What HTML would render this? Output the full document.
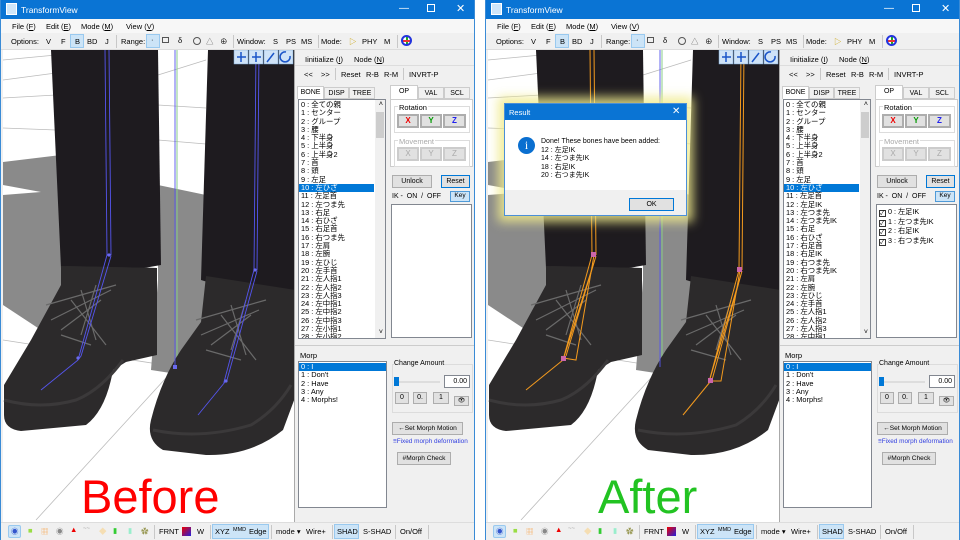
<!DOCTYPE html>
<html><head><meta charset="utf-8">
<style>
*{margin:0;padding:0;box-sizing:border-box}
body{width:960px;height:540px;background:#fff;position:relative;overflow:hidden;font-family:"Liberation Sans","Noto Sans CJK JP",sans-serif;font-size:7.5px;color:#000}
.win{position:absolute;top:0;width:475px;height:540px;background:#f0f0f0;overflow:hidden;border-left:1px solid #3a8bd6;border-right:1px solid #3a8bd6}
.a{position:absolute;white-space:nowrap}
.title{left:0;top:0;width:475px;height:19px;background:#0a74d4;color:#fff;font-size:8.5px}
.menu{left:0;top:19px;width:475px;height:14px;background:#f7f7f7}
.tb{left:0;top:33px;width:475px;height:17px;background:#f0f0f0;border-bottom:1px solid #ddd}
.sel{background:#cce4f7;border:1px solid #99c9ef}
.vp{left:2px;top:50px;width:291px;height:472px;background:#fff;overflow:hidden}
.vp svg{display:block}
.btn{position:absolute;background:#e1e1e1;border:1px solid #adadad;text-align:center;font-size:7px;white-space:nowrap;overflow:hidden}
.box{position:absolute;background:#fff;border:1px solid #828790}
.li{height:8.3px;line-height:8.3px;font-size:7.4px;padding-left:2px;white-space:nowrap}
.hl{background:#0078d7;color:#fff}
.grp{position:absolute;border:1px solid #dcdcdc}
.status{left:0;top:522px;width:475px;height:18px;background:#f0f0f0;border-top:1px solid #ddd}
.sep{position:absolute;width:1px;background:#c8c8c8}
.tab{position:absolute;height:12px;border:1px solid #ccc;font-size:7px;padding-top:2px;text-align:center}
</style></head><body>

<!-- LEFT WINDOW -->
<div class="win" style="left:0">
 <div class="a title"><span class="a" style="left:5px;top:3px;width:11px;height:12px;background:#cfe6fa;border:1px solid #fff"></span><span class="a" style="left:20px;top:5px">TransformView</span>
  <span class="a" style="left:398px;top:3px;font-size:10px">&#8212;</span><span class="a" style="left:426px;top:4px;width:8px;height:8px;border:1px solid #fff"></span><span class="a" style="left:455px;top:2px;font-size:11px">✕</span></div>
 <div class="a menu"><span class="a" style="left:11px;top:3px">File (<u>F</u>)</span><span class="a" style="left:45px;top:3px">Edit (<u>E</u>)</span><span class="a" style="left:80px;top:3px">Mode (<u>M</u>)</span><span class="a" style="left:125px;top:3px">View (<u>V</u>)</span></div>
 <div class="a tb">
  <span class="a" style="left:10px;top:4px">Options:</span><span class="a" style="left:45px;top:4px">V</span><span class="a" style="left:60px;top:4px">F</span>
  <span class="a sel" style="left:69px;top:1px;width:14px;height:14px"></span><span class="a" style="left:74px;top:4px">B</span>
  <span class="a" style="left:86px;top:4px">BD</span><span class="a" style="left:104px;top:4px">J</span><span class="sep" style="left:115px;top:2px;height:13px"></span>
  <span class="a" style="left:120px;top:4px">Range:</span><span class="a sel" style="left:145px;top:1px;width:14px;height:14px"></span><span class="a" style="left:150px;top:2px">·</span>
  <span class="a" style="left:161px;top:4px;width:7px;height:6px;border:1px solid #555"></span><span class="a" style="left:177px;top:3px">δ</span><span class="a" style="left:192px;top:4px;width:8px;height:8px;border:1px solid #555;border-radius:50%"></span><span class="a" style="left:205px;top:3px;color:#555">△</span><span class="a" style="left:219px;top:3px">⊕</span>
  <span class="sep" style="left:232px;top:2px;height:13px"></span><span class="a" style="left:236px;top:4px">Window:</span><span class="a" style="left:272px;top:4px">S</span><span class="a" style="left:285px;top:4px">PS</span><span class="a" style="left:300px;top:4px">MS</span>
  <span class="sep" style="left:317px;top:2px;height:13px"></span><span class="a" style="left:320px;top:4px">Mode:</span><span class="a" style="left:348px;top:3px;color:#c8a000">▷</span><span class="a" style="left:361px;top:4px">PHY</span><span class="a" style="left:383px;top:4px">M</span>
  <span class="sep" style="left:396px;top:2px;height:13px"></span><span class="a" style="left:400px;top:2px;width:11px;height:11px;border-radius:50%;border:2px solid #2233dd;background:linear-gradient(#e33,#e33) center/7px 2px no-repeat,linear-gradient(#2a2,#2a2) center/2px 7px no-repeat,#fff"></span>
 </div>
 <div class="a vp"><svg width="291" height="472" viewBox="2 50 291 472">
  <g stroke="#bbb" stroke-width="0.8"><line x1="2" y1="60" x2="55" y2="55"/><line x1="2" y1="80" x2="55" y2="73"/><line x1="2" y1="98" x2="55" y2="95"/><line x1="2" y1="128" x2="55" y2="130"/><line x1="157" y1="75" x2="205" y2="60"/><line x1="157" y1="105" x2="205" y2="108"/><line x1="157" y1="140" x2="205" y2="144"/><line x1="2" y1="340" x2="293" y2="385"/><line x1="35" y1="520" x2="175" y2="367"/></g>
  <path d="M2 162 L60 155 L60 300 L100 360 L40 330 L2 305Z" fill="#8a8a8a"/>
  <path d="M157 185 L205 195 L210 300 L215 380 L150 370 L157 280Z" fill="#8a8a8a"/>
  <path d="M2 185 L40 192 L2 195Z" fill="#fff"/>
  <line x1="176" y1="50" x2="176" y2="367" stroke="#8c8" stroke-width="1"/>
  <path d="M50 50 L157 50 L160 265 L120 272 L60 268Z" fill="#1e1b1f"/>
  <path d="M207 50 L295 50 L295 292 L258 298 L200 280Z" fill="#1e1b1f"/>
  <path d="M65 266 L156 268 L156 355 L125 362 L112 370 Q105 410 85 425 L20 431 Q3 429 3 415 L3 385 L30 340 L60 285Z" fill="#2c2a2b"/>
  <path d="M60 266 L156 268 L156 355 L60 355Z" fill="#2c2a2b"/>
  <path d="M205 276 L295 290 L295 395 L282 430 Q250 456 205 455 L162 450 Q145 440 150 420 Q160 380 180 350 L200 322Z" fill="#2c2a2b"/>
  <path d="M3 400 Q40 410 75 400 Q100 390 122 360" stroke="#3b393a" stroke-width="3" fill="none"/>
  <path d="M152 430 Q200 440 250 425 Q275 410 290 385" stroke="#3b393a" stroke-width="3" fill="none"/>
  <g stroke="#6a6a6a" stroke-width="1.2" fill="none"><path d="M45 305 L115 285 M50 320 L110 290 M60 330 L100 300 M80 290 L95 340 M70 300 L105 345 M95 285 L80 335 M90 345 L60 335"/><path d="M195 320 L265 300 M200 335 L258 310 M210 345 L250 315 M230 305 L245 355 M220 315 L255 360 M245 300 L230 350 M240 360 L205 350"/></g>
  <g stroke="#5555ee" stroke-width="0.9" fill="none"><path d="M104 50 L106 255 L110 255 L108 50"/><path d="M106 255 L77 360 L80 356 L110 256"/><path d="M77 360 L40 390"/><path d="M255 50 L253 270 L256 270 L258 50"/><path d="M253 270 L223 382 L226 380 L256 271"/><path d="M224 382 L197 415"/><line x1="174" y1="50" x2="174" y2="367"/></g>
  <g fill="#6a6aee"><circle cx="108" cy="255" r="1.6"/><circle cx="77" cy="358" r="1.6"/><circle cx="254" cy="270" r="1.6"/><circle cx="225" cy="381" r="1.6"/><rect x="172" y="365" width="4" height="4"/></g>
  <g fill="#cfe3f7" stroke="#7aa7d6" stroke-width="0.5"><rect x="233" y="50" width="14" height="14"/><rect x="248" y="50" width="14" height="14"/><rect x="263" y="50" width="14" height="14"/><rect x="278" y="50" width="14" height="14"/></g>
  <g stroke="#1a55c8" stroke-width="1.5" fill="none"><path d="M236 57 H245 M240 52 V62"/><path d="M251 57 H260 M255 52 V62"/><path d="M266 62 L273 53"/><path d="M289 56 A5 5 0 1 1 285 52"/></g>
  <text x="80" y="513" font-family="Liberation Sans" font-size="47" fill="#f00">Before</text>
 </svg></div>
 <div class="a" style="left:293px;top:50px;width:182px;height:472px;background:#f0f0f0;border-left:1px solid #aaa"></div>
 <span class="a" style="left:304px;top:55px">Iinitialize (<u>I</u>)</span><span class="a" style="left:353px;top:55px">Node (<u>N</u>)</span>
 <div class="a" style="left:294px;top:65px;width:180px;height:1px;background:#ddd"></div>
 <span class="a" style="left:303px;top:70px">&lt;&lt;</span><span class="a" style="left:320px;top:70px">&gt;&gt;</span><span class="sep" style="left:334px;top:68px;height:12px"></span><span class="a" style="left:340px;top:70px">Reset</span><span class="a" style="left:365px;top:70px">R-B</span><span class="a" style="left:383px;top:70px">R-M</span><span class="sep" style="left:402px;top:68px;height:12px"></span><span class="a" style="left:408px;top:70px">INVRT-P</span>
 <div class="tab" style="left:296px;top:86px;width:27px;height:13px;background:#fff;border-bottom:none">BONE</div><div class="tab" style="left:323px;top:87px;width:25px">DISP</div><div class="tab" style="left:348px;top:87px;width:26px">TREE</div>
 <div class="box" style="left:297px;top:99px;width:88px;height:240px;overflow:hidden"><div style="padding-top:1px">
  <div class="li">0 : 全ての親</div><div class="li">1 : センター</div><div class="li">2 : グループ</div><div class="li">3 : 腰</div><div class="li">4 : 下半身</div><div class="li">5 : 上半身</div><div class="li">6 : 上半身2</div><div class="li">7 : 首</div><div class="li">8 : 頭</div><div class="li">9 : 左足</div><div class="li hl" style="width:75px">10 : 左ひざ</div><div class="li">11 : 左足首</div><div class="li">12 : 左つま先</div><div class="li">13 : 右足</div><div class="li">14 : 右ひざ</div><div class="li">15 : 右足首</div><div class="li">16 : 右つま先</div><div class="li">17 : 左肩</div><div class="li">18 : 左腕</div><div class="li">19 : 左ひじ</div><div class="li">20 : 左手首</div><div class="li">21 : 左人指1</div><div class="li">22 : 左人指2</div><div class="li">23 : 左人指3</div><div class="li">24 : 左中指1</div><div class="li">25 : 左中指2</div><div class="li">26 : 左中指3</div><div class="li">27 : 左小指1</div><div class="li">28 : 左小指2</div></div>
  <div class="a" style="right:0;top:0;width:10px;height:238px;background:#f0f0f0"></div><div class="a" style="right:1px;top:12px;width:8px;height:26px;background:#cdcdcd"></div><span class="a" style="right:2px;top:1px;font-size:7px">˄</span><span class="a" style="right:2px;top:229px;font-size:7px">˅</span></div>
 <div class="tab" style="left:389px;top:85px;width:28px;height:14px;background:#fff;border-bottom:none">OP</div><div class="tab" style="left:417px;top:87px;width:26px">VAL</div><div class="tab" style="left:443px;top:87px;width:26px">SCL</div>
 <div class="a" style="left:389px;top:99px;width:83px;height:68px;background:#fff;border:1px solid #ccc"></div>
 <div class="grp" style="left:393px;top:106px;width:76px;height:27px"></div><span class="a" style="left:397px;top:103px;background:#fff;padding:0 1px">Rotation</span>
 <div class="btn" style="left:396px;top:114px;width:22px;height:14px;color:#e00;font-weight:bold;border:2px solid #adadad;font-size:8px">X</div><div class="btn" style="left:419px;top:114px;width:22px;height:14px;color:#090;font-weight:bold;border:2px solid #adadad;font-size:8px">Y</div><div class="btn" style="left:442px;top:114px;width:23px;height:14px;color:#22e;font-weight:bold;border:2px solid #adadad;font-size:8px">Z</div>
 <div class="grp" style="left:393px;top:140px;width:76px;height:27px"></div><span class="a" style="left:397px;top:137px;background:#fff;color:#aaa;padding:0 1px">Movement</span>
 <div class="btn" style="left:396px;top:147px;width:22px;height:14px;color:#aaa;border:2px solid #ccc;font-size:8px">X</div><div class="btn" style="left:419px;top:147px;width:22px;height:14px;color:#aaa;border:2px solid #ccc;font-size:8px">Y</div><div class="btn" style="left:442px;top:147px;width:23px;height:14px;color:#aaa;border:2px solid #ccc;font-size:8px">Z</div>
 <div class="btn" style="left:391px;top:175px;width:40px;height:13px;padding-top:2px">Unlock</div><div class="btn" style="left:440px;top:175px;width:29px;height:13px;border:1px solid #0078d7;padding-top:2px">Reset</div>
 <span class="a" style="left:391px;top:193px;font-size:7px">IK -&nbsp; ON&nbsp; /&nbsp; OFF</span><div class="btn" style="left:449px;top:191px;width:20px;height:11px;background:#cce4f7;border-color:#4f9ad8;font-size:6.5px">Key</div>
 <div class="box" style="left:390px;top:204px;width:81px;height:134px"></div>
 <div class="a" style="left:294px;top:345px;width:180px;height:1px;background:#ccc"></div>
 <span class="a" style="left:299px;top:351px">Morp</span>
 <div class="box" style="left:297px;top:361px;width:89px;height:147px"><div class="li hl" style="margin-top:1px">0 : I</div><div class="li">1 : Don't</div><div class="li">2 : Have</div><div class="li">3 : Any</div><div class="li">4 : Morphs!</div></div>
 <div class="grp" style="left:391px;top:364px;width:81px;height:49px"></div><span class="a" style="left:393px;top:360px;background:#f0f0f0;font-size:7px">Change Amount</span>
 <div class="a" style="left:394px;top:381px;width:45px;height:2px;background:#ddd"></div><div class="a" style="left:393px;top:377px;width:5px;height:9px;background:#0078d7"></div>
 <div class="box" style="left:443px;top:375px;width:26px;height:13px;text-align:right;padding:2px 2px 0 0;font-size:7px">0.00</div>
 <div class="btn" style="left:394px;top:392px;width:14px;height:12px;padding-top:1px">0</div><div class="btn" style="left:412px;top:392px;width:14px;height:12px;padding-top:1px">0.</div><div class="btn" style="left:432px;top:392px;width:16px;height:12px;padding-top:1px">1</div><div class="btn" style="left:453px;top:396px;width:15px;height:10px;font-size:6px">👁</div>
 <div class="btn" style="left:391px;top:422px;width:71px;height:13px;padding-top:2px;font-size:6.6px">←Set Morph Motion</div>
 <span class="a" style="left:392px;top:438px;color:#3340e0;font-size:6.4px">≡Fixed morph deformation</span>
 <div class="btn" style="left:396px;top:452px;width:54px;height:13px;padding-top:2px;font-size:6.6px">#Morph Check</div>
 <div class="a status">
  <span class="a sel" style="left:7px;top:2px;width:13px;height:13px;border-radius:2px"></span><span class="a" style="left:10px;top:3px;color:#35c">◉</span>
  <span class="a" style="left:27px;top:3px;color:#9d4">■</span><span class="a" style="left:40px;top:3px;color:#f6b26b">▦</span><span class="a" style="left:55px;top:3px;color:#888">◉</span><span class="a" style="left:69px;top:2px;color:#e00">▲</span><span class="a" style="left:82px;top:3px;color:#aaa;font-size:6px">~~</span><span class="a" style="left:98px;top:3px;color:#f5deb3">◆</span><span class="a" style="left:112px;top:3px;color:#3c3">▮</span><span class="a" style="left:127px;top:3px;color:#9ec">▮</span><span class="a" style="left:140px;top:3px;color:#995">✿</span>
  <span class="sep" style="left:153px;top:2px;height:14px"></span><span class="a" style="left:158px;top:4px">FRNT</span><span class="a" style="left:181px;top:4px;width:9px;height:9px;background:linear-gradient(135deg,#e00,#22d)"></span><span class="a" style="left:196px;top:4px">W</span>
  <span class="sep" style="left:209px;top:2px;height:14px"></span><span class="a sel" style="left:211px;top:1px;width:57px;height:15px"></span><span class="a" style="left:214px;top:4px">XYZ</span><span class="a" style="left:232px;top:4px;font-size:5.5px">MMD</span><span class="a" style="left:248px;top:4px">Edge</span>
  <span class="sep" style="left:270px;top:2px;height:14px"></span><span class="a" style="left:275px;top:4px">mode ▾</span><span class="a" style="left:305px;top:4px">Wire+</span>
  <span class="sep" style="left:331px;top:2px;height:14px"></span><span class="a sel" style="left:333px;top:1px;width:25px;height:15px"></span><span class="a" style="left:336px;top:4px">SHAD</span><span class="a" style="left:362px;top:4px">S-SHAD</span>
  <span class="sep" style="left:394px;top:2px;height:14px"></span><span class="a" style="left:399px;top:4px">On/Off</span><span class="sep" style="left:427px;top:2px;height:14px"></span>
 </div>
</div>

<!-- RIGHT WINDOW -->
<div class="win" style="left:485px">
 <div class="a title"><span class="a" style="left:5px;top:3px;width:11px;height:12px;background:#cfe6fa;border:1px solid #fff"></span><span class="a" style="left:20px;top:5px">TransformView</span>
  <span class="a" style="left:398px;top:3px;font-size:10px">&#8212;</span><span class="a" style="left:426px;top:4px;width:8px;height:8px;border:1px solid #fff"></span><span class="a" style="left:455px;top:2px;font-size:11px">✕</span></div>
 <div class="a menu"><span class="a" style="left:11px;top:3px">File (<u>F</u>)</span><span class="a" style="left:45px;top:3px">Edit (<u>E</u>)</span><span class="a" style="left:80px;top:3px">Mode (<u>M</u>)</span><span class="a" style="left:125px;top:3px">View (<u>V</u>)</span></div>
 <div class="a tb">
  <span class="a" style="left:10px;top:4px">Options:</span><span class="a" style="left:45px;top:4px">V</span><span class="a" style="left:60px;top:4px">F</span>
  <span class="a sel" style="left:69px;top:1px;width:14px;height:14px"></span><span class="a" style="left:74px;top:4px">B</span>
  <span class="a" style="left:86px;top:4px">BD</span><span class="a" style="left:104px;top:4px">J</span><span class="sep" style="left:115px;top:2px;height:13px"></span>
  <span class="a" style="left:120px;top:4px">Range:</span><span class="a sel" style="left:145px;top:1px;width:14px;height:14px"></span><span class="a" style="left:150px;top:2px">·</span>
  <span class="a" style="left:161px;top:4px;width:7px;height:6px;border:1px solid #555"></span><span class="a" style="left:177px;top:3px">δ</span><span class="a" style="left:192px;top:4px;width:8px;height:8px;border:1px solid #555;border-radius:50%"></span><span class="a" style="left:205px;top:3px;color:#555">△</span><span class="a" style="left:219px;top:3px">⊕</span>
  <span class="sep" style="left:232px;top:2px;height:13px"></span><span class="a" style="left:236px;top:4px">Window:</span><span class="a" style="left:272px;top:4px">S</span><span class="a" style="left:285px;top:4px">PS</span><span class="a" style="left:300px;top:4px">MS</span>
  <span class="sep" style="left:317px;top:2px;height:13px"></span><span class="a" style="left:320px;top:4px">Mode:</span><span class="a" style="left:348px;top:3px;color:#c8a000">▷</span><span class="a" style="left:361px;top:4px">PHY</span><span class="a" style="left:383px;top:4px">M</span>
  <span class="sep" style="left:396px;top:2px;height:13px"></span><span class="a" style="left:400px;top:2px;width:11px;height:11px;border-radius:50%;border:2px solid #2233dd;background:linear-gradient(#e33,#e33) center/7px 2px no-repeat,linear-gradient(#2a2,#2a2) center/2px 7px no-repeat,#fff"></span>
 </div>
 <div class="a vp"><svg width="291" height="472" viewBox="2 50 291 472">
  <g stroke="#bbb" stroke-width="0.8"><line x1="2" y1="60" x2="55" y2="55"/><line x1="2" y1="80" x2="55" y2="73"/><line x1="2" y1="98" x2="55" y2="95"/><line x1="2" y1="128" x2="55" y2="130"/><line x1="157" y1="75" x2="205" y2="60"/><line x1="157" y1="105" x2="205" y2="108"/><line x1="157" y1="140" x2="205" y2="144"/><line x1="2" y1="340" x2="293" y2="385"/><line x1="35" y1="520" x2="175" y2="367"/></g>
  <path d="M2 162 L60 155 L60 300 L100 360 L40 330 L2 305Z" fill="#8a8a8a"/>
  <path d="M157 185 L205 195 L210 300 L215 380 L150 370 L157 280Z" fill="#8a8a8a"/>
  <path d="M2 185 L40 192 L2 195Z" fill="#fff"/>
  <line x1="176" y1="50" x2="176" y2="367" stroke="#8c8" stroke-width="1"/>
  <path d="M50 50 L157 50 L160 265 L120 272 L60 268Z" fill="#1e1b1f"/>
  <path d="M207 50 L295 50 L295 292 L258 298 L200 280Z" fill="#1e1b1f"/>
  <path d="M65 266 L156 268 L156 355 L125 362 L112 370 Q105 410 85 425 L20 431 Q3 429 3 415 L3 385 L30 340 L60 285Z" fill="#2c2a2b"/>
  <path d="M60 266 L156 268 L156 355 L60 355Z" fill="#2c2a2b"/>
  <path d="M205 276 L295 290 L295 395 L282 430 Q250 456 205 455 L162 450 Q145 440 150 420 Q160 380 180 350 L200 322Z" fill="#2c2a2b"/>
  <path d="M3 400 Q40 410 75 400 Q100 390 122 360" stroke="#3b393a" stroke-width="3" fill="none"/>
  <path d="M152 430 Q200 440 250 425 Q275 410 290 385" stroke="#3b393a" stroke-width="3" fill="none"/>
  <g stroke="#6a6a6a" stroke-width="1.2" fill="none"><path d="M45 305 L115 285 M50 320 L110 290 M60 330 L100 300 M80 290 L95 340 M70 300 L105 345 M95 285 L80 335 M90 345 L60 335"/><path d="M195 320 L265 300 M200 335 L258 310 M210 345 L250 315 M230 305 L245 355 M220 315 L255 360 M245 300 L230 350 M240 360 L205 350"/></g>
  <g stroke="#f39a1e" stroke-width="1" fill="none"><path d="M104 50 L106 255 M108 50 L110 255"/><path d="M106 255 L77 360 L110 256 L80 356"/><path d="M77 360 L40 390"/><path d="M255 50 L253 270 M258 50 L256 270"/><path d="M253 270 L223 382 L256 271 L226 380"/><path d="M224 382 L197 415"/><path d="M108 255 L90 360 L77 358 M254 270 L235 381 L225 381"/></g>
  <line x1="174" y1="50" x2="174" y2="367" stroke="#5555ee" stroke-width="0.9"/>
  <g fill="#c6a"><rect x="105" y="252" width="5" height="5"/><rect x="75" y="356" width="5" height="5"/><rect x="251" y="267" width="5" height="5"/><rect x="222" y="378" width="5" height="5"/></g>
  <g fill="#cfe3f7" stroke="#7aa7d6" stroke-width="0.5"><rect x="233" y="50" width="14" height="14"/><rect x="248" y="50" width="14" height="14"/><rect x="263" y="50" width="14" height="14"/><rect x="278" y="50" width="14" height="14"/></g>
  <g stroke="#1a55c8" stroke-width="1.5" fill="none"><path d="M236 57 H245 M240 52 V62"/><path d="M251 57 H260 M255 52 V62"/><path d="M266 62 L273 53"/><path d="M289 56 A5 5 0 1 1 285 52"/></g>
  <text x="112" y="513" font-family="Liberation Sans" font-size="47" fill="#22c322">After</text>
 </svg></div>
 <div class="a" style="left:293px;top:50px;width:182px;height:472px;background:#f0f0f0;border-left:1px solid #aaa"></div>
 <span class="a" style="left:304px;top:55px">Iinitialize (<u>I</u>)</span><span class="a" style="left:353px;top:55px">Node (<u>N</u>)</span>
 <div class="a" style="left:294px;top:65px;width:180px;height:1px;background:#ddd"></div>
 <span class="a" style="left:303px;top:70px">&lt;&lt;</span><span class="a" style="left:320px;top:70px">&gt;&gt;</span><span class="sep" style="left:334px;top:68px;height:12px"></span><span class="a" style="left:340px;top:70px">Reset</span><span class="a" style="left:365px;top:70px">R-B</span><span class="a" style="left:383px;top:70px">R-M</span><span class="sep" style="left:402px;top:68px;height:12px"></span><span class="a" style="left:408px;top:70px">INVRT-P</span>
 <div class="tab" style="left:296px;top:86px;width:27px;height:13px;background:#fff;border-bottom:none">BONE</div><div class="tab" style="left:323px;top:87px;width:25px">DISP</div><div class="tab" style="left:348px;top:87px;width:26px">TREE</div>
 <div class="box" style="left:297px;top:99px;width:88px;height:240px;overflow:hidden"><div style="padding-top:1px">
  <div class="li">0 : 全ての親</div><div class="li">1 : センター</div><div class="li">2 : グループ</div><div class="li">3 : 腰</div><div class="li">4 : 下半身</div><div class="li">5 : 上半身</div><div class="li">6 : 上半身2</div><div class="li">7 : 首</div><div class="li">8 : 頭</div><div class="li">9 : 左足</div><div class="li hl" style="width:75px">10 : 左ひざ</div><div class="li">11 : 左足首</div><div class="li">12 : 左足IK</div><div class="li">13 : 左つま先</div><div class="li">14 : 左つま先IK</div><div class="li">15 : 右足</div><div class="li">16 : 右ひざ</div><div class="li">17 : 右足首</div><div class="li">18 : 右足IK</div><div class="li">19 : 右つま先</div><div class="li">20 : 右つま先IK</div><div class="li">21 : 左肩</div><div class="li">22 : 左腕</div><div class="li">23 : 左ひじ</div><div class="li">24 : 左手首</div><div class="li">25 : 左人指1</div><div class="li">26 : 左人指2</div><div class="li">27 : 左人指3</div><div class="li">28 : 左中指1</div></div>
  <div class="a" style="right:0;top:0;width:10px;height:238px;background:#f0f0f0"></div><div class="a" style="right:1px;top:12px;width:8px;height:26px;background:#cdcdcd"></div><span class="a" style="right:2px;top:1px;font-size:7px">˄</span><span class="a" style="right:2px;top:229px;font-size:7px">˅</span></div>
 <div class="tab" style="left:389px;top:85px;width:28px;height:14px;background:#fff;border-bottom:none">OP</div><div class="tab" style="left:417px;top:87px;width:26px">VAL</div><div class="tab" style="left:443px;top:87px;width:26px">SCL</div>
 <div class="a" style="left:389px;top:99px;width:83px;height:68px;background:#fff;border:1px solid #ccc"></div>
 <div class="grp" style="left:393px;top:106px;width:76px;height:27px"></div><span class="a" style="left:397px;top:103px;background:#fff;padding:0 1px">Rotation</span>
 <div class="btn" style="left:396px;top:114px;width:22px;height:14px;color:#e00;font-weight:bold;border:2px solid #adadad;font-size:8px">X</div><div class="btn" style="left:419px;top:114px;width:22px;height:14px;color:#090;font-weight:bold;border:2px solid #adadad;font-size:8px">Y</div><div class="btn" style="left:442px;top:114px;width:23px;height:14px;color:#22e;font-weight:bold;border:2px solid #adadad;font-size:8px">Z</div>
 <div class="grp" style="left:393px;top:140px;width:76px;height:27px"></div><span class="a" style="left:397px;top:137px;background:#fff;color:#aaa;padding:0 1px">Movement</span>
 <div class="btn" style="left:396px;top:147px;width:22px;height:14px;color:#aaa;border:2px solid #ccc;font-size:8px">X</div><div class="btn" style="left:419px;top:147px;width:22px;height:14px;color:#aaa;border:2px solid #ccc;font-size:8px">Y</div><div class="btn" style="left:442px;top:147px;width:23px;height:14px;color:#aaa;border:2px solid #ccc;font-size:8px">Z</div>
 <div class="btn" style="left:391px;top:175px;width:40px;height:13px;padding-top:2px">Unlock</div><div class="btn" style="left:440px;top:175px;width:29px;height:13px;border:1px solid #0078d7;padding-top:2px">Reset</div>
 <span class="a" style="left:391px;top:193px;font-size:7px">IK -&nbsp; ON&nbsp; /&nbsp; OFF</span><div class="btn" style="left:449px;top:191px;width:20px;height:11px;background:#cce4f7;border-color:#4f9ad8;font-size:6.5px">Key</div>
 <div class="box" style="left:390px;top:204px;width:81px;height:134px;padding:2px 0 0 2px">
  <div style="height:9.5px;line-height:9px;font-size:7.2px;white-space:nowrap"><span style="display:inline-block;width:7px;height:7px;border:1px solid #333;font-size:6px;line-height:6px;vertical-align:-1px">✓</span> 0 : 左足IK</div>
  <div style="height:9.5px;line-height:9px;font-size:7.2px;white-space:nowrap"><span style="display:inline-block;width:7px;height:7px;border:1px solid #333;font-size:6px;line-height:6px;vertical-align:-1px">✓</span> 1 : 左つま先IK</div>
  <div style="height:9.5px;line-height:9px;font-size:7.2px;white-space:nowrap"><span style="display:inline-block;width:7px;height:7px;border:1px solid #333;font-size:6px;line-height:6px;vertical-align:-1px">✓</span> 2 : 右足IK</div>
  <div style="height:9.5px;line-height:9px;font-size:7.2px;white-space:nowrap"><span style="display:inline-block;width:7px;height:7px;border:1px solid #333;font-size:6px;line-height:6px;vertical-align:-1px">✓</span> 3 : 右つま先IK</div></div>
 <div class="a" style="left:294px;top:345px;width:180px;height:1px;background:#ccc"></div>
 <span class="a" style="left:299px;top:351px">Morp</span>
 <div class="box" style="left:297px;top:361px;width:89px;height:147px"><div class="li hl" style="margin-top:1px">0 : I</div><div class="li">1 : Don't</div><div class="li">2 : Have</div><div class="li">3 : Any</div><div class="li">4 : Morphs!</div></div>
 <div class="grp" style="left:391px;top:364px;width:81px;height:49px"></div><span class="a" style="left:393px;top:360px;background:#f0f0f0;font-size:7px">Change Amount</span>
 <div class="a" style="left:394px;top:381px;width:45px;height:2px;background:#ddd"></div><div class="a" style="left:393px;top:377px;width:5px;height:9px;background:#0078d7"></div>
 <div class="box" style="left:443px;top:375px;width:26px;height:13px;text-align:right;padding:2px 2px 0 0;font-size:7px">0.00</div>
 <div class="btn" style="left:394px;top:392px;width:14px;height:12px;padding-top:1px">0</div><div class="btn" style="left:412px;top:392px;width:14px;height:12px;padding-top:1px">0.</div><div class="btn" style="left:432px;top:392px;width:16px;height:12px;padding-top:1px">1</div><div class="btn" style="left:453px;top:396px;width:15px;height:10px;font-size:6px">👁</div>
 <div class="btn" style="left:391px;top:422px;width:71px;height:13px;padding-top:2px;font-size:6.6px">←Set Morph Motion</div>
 <span class="a" style="left:392px;top:438px;color:#3340e0;font-size:6.4px">≡Fixed morph deformation</span>
 <div class="btn" style="left:396px;top:452px;width:54px;height:13px;padding-top:2px;font-size:6.6px">#Morph Check</div>
 <div class="a status">
  <span class="a sel" style="left:7px;top:2px;width:13px;height:13px;border-radius:2px"></span><span class="a" style="left:10px;top:3px;color:#35c">◉</span>
  <span class="a" style="left:27px;top:3px;color:#9d4">■</span><span class="a" style="left:40px;top:3px;color:#f6b26b">▦</span><span class="a" style="left:55px;top:3px;color:#888">◉</span><span class="a" style="left:69px;top:2px;color:#e00">▲</span><span class="a" style="left:82px;top:3px;color:#aaa;font-size:6px">~~</span><span class="a" style="left:98px;top:3px;color:#f5deb3">◆</span><span class="a" style="left:112px;top:3px;color:#3c3">▮</span><span class="a" style="left:127px;top:3px;color:#9ec">▮</span><span class="a" style="left:140px;top:3px;color:#995">✿</span>
  <span class="sep" style="left:153px;top:2px;height:14px"></span><span class="a" style="left:158px;top:4px">FRNT</span><span class="a" style="left:181px;top:4px;width:9px;height:9px;background:linear-gradient(135deg,#e00,#22d)"></span><span class="a" style="left:196px;top:4px">W</span>
  <span class="sep" style="left:209px;top:2px;height:14px"></span><span class="a sel" style="left:211px;top:1px;width:57px;height:15px"></span><span class="a" style="left:214px;top:4px">XYZ</span><span class="a" style="left:232px;top:4px;font-size:5.5px">MMD</span><span class="a" style="left:248px;top:4px">Edge</span>
  <span class="sep" style="left:270px;top:2px;height:14px"></span><span class="a" style="left:275px;top:4px">mode ▾</span><span class="a" style="left:305px;top:4px">Wire+</span>
  <span class="sep" style="left:331px;top:2px;height:14px"></span><span class="a sel" style="left:333px;top:1px;width:25px;height:15px"></span><span class="a" style="left:336px;top:4px">SHAD</span><span class="a" style="left:362px;top:4px">S-SHAD</span>
  <span class="sep" style="left:394px;top:2px;height:14px"></span><span class="a" style="left:399px;top:4px">On/Off</span><span class="sep" style="left:427px;top:2px;height:14px"></span>
 </div>
 <div class="a" style="left:18px;top:103px;width:183px;height:113px;background:#f0f0f0;border:1px solid #4a8fd8;box-shadow:0 0 10px 6px rgba(240,235,140,0.85)">
  <div class="a" style="left:0;top:0;width:181px;height:16px;background:#0a74d4;color:#fff"><span class="a" style="left:4px;top:4px">Result</span><span class="a" style="left:167px;top:2px;font-size:10px">✕</span></div>
  <div class="a" style="left:0;top:16px;width:181px;height:70px;background:#fff"></div>
  <div class="a" style="left:13px;top:33px;width:17px;height:17px;border-radius:50%;background:#0a6fd0;color:#fff;text-align:center;font-size:12px;line-height:17px;font-family:'Liberation Serif',serif">i</div>
  <div class="a" style="left:36px;top:34px;font-size:7px;line-height:8.5px">Done! These bones have been added:<br>12 : 左足IK<br>14 : 左つま先IK<br>18 : 右足IK<br>20 : 右つま先IK</div>
  <div class="btn" style="left:124px;top:94px;width:45px;height:13px;border:1px solid #0078d7;padding-top:2px">OK</div>
 </div>
</div>
</body></html>
